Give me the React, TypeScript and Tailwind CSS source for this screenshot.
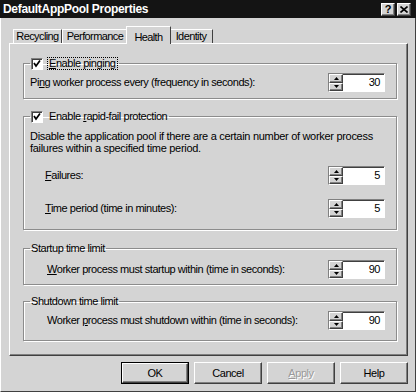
import React from "react";

const raised = "border border-t-white border-l-white border-r-[#404040] border-b-[#404040] shadow-[inset_-1px_-1px_0_#808080]";
const sunken = "border border-t-[#808080] border-l-[#808080] border-r-white border-b-white shadow-[inset_1px_1px_0_#404040]";
const etched = "border border-[#8c8c8c] shadow-[inset_1px_1px_0_#fff,1px_1px_0_#fff]";

function Check() {
  return (
    <span className={`inline-flex h-[12px] w-[12px] items-center justify-center bg-white ${sunken}`}>
      <svg width="8" height="8" viewBox="0 0 8 8">
        <path d="M1 3 L3 6 L7 0.5" fill="none" stroke="#000" strokeWidth="1.7" />
      </svg>
    </span>
  );
}

function Arrow({ up }: { up?: boolean }) {
  return (
    <span className={`flex h-[9px] w-full items-center justify-center bg-[#d4d4d4] ${raised}`}>
      <svg width="5" height="3" viewBox="0 0 5 3">
        <path d={up ? "M2.5 0 L5 3 L0 3 Z" : "M0 0 L5 0 L2.5 3 Z"} fill="#000" />
      </svg>
    </span>
  );
}

function Spin({ value }: { value: string }) {
  return (
    <div className={`flex h-[19px] w-[57px] shrink-0 bg-white ${sunken}`}>
      <div className="flex w-[14px] flex-col bg-[#d4d4d4]">
        <Arrow up />
        <Arrow />
      </div>
      <div className="flex flex-1 items-center justify-end pr-[4px] leading-none">{value}</div>
    </div>
  );
}

function Row({ pl, label, value }: { pl: string; label: React.ReactNode; value: string }) {
  return (
    <div className={`flex items-center justify-between ${pl}`}>
      <span>{label}</span>
      <Spin value={value} />
    </div>
  );
}

function Btn({ children, def, disabled }: { children: React.ReactNode; def?: boolean; disabled?: boolean }) {
  return (
    <div className={`h-[22px] w-[68px] ${def ? "border border-black" : ""}`}>
      <div
        className={`flex h-full w-full items-center justify-center ${raised} ${disabled ? "text-[#9a9a9a] [text-shadow:1px_1px_0_#fff]" : ""}`}
      >
        {children}
      </div>
    </div>
  );
}

const tabs = [
  { name: "Recycling", w: "w-[49px]" },
  { name: "Performance", w: "w-[66px]" },
  { name: "Health", w: "w-[41px]", active: true },
  { name: "Identity", w: "w-[44px]" },
];

export default function App() {
  return (
    <div className="h-[392px] w-[416px] overflow-hidden bg-[#d4d4d4] font-['Liberation_Sans',Arial,sans-serif] text-[11px] tracking-[-0.45px] text-black">
      <div className="flex h-[18px] items-center justify-between bg-[#141414] pl-[3px] pr-[5px]">
        <span className="text-[12px] font-bold tracking-[-0.3px] text-white">DefaultAppPool Properties</span>
        <div className="flex gap-[2px]">
          <span className={`flex h-[13px] w-[14px] items-center justify-center bg-[#d4d4d4] text-[11px] font-bold leading-none ${raised}`}>?</span>
          <span className={`flex h-[13px] w-[14px] items-center justify-center bg-[#d4d4d4] ${raised}`}>
            <svg width="8" height="7" viewBox="0 0 8 7">
              <path d="M0.5 0.5 L7.5 6.5 M7.5 0.5 L0.5 6.5" stroke="#000" strokeWidth="1.6" />
            </svg>
          </span>
        </div>
      </div>

      <div className="flex h-[374px] flex-col border-r border-b border-l border-r-[#404040] border-b-[#404040] border-l-white pt-[9px]">
        <div className="ml-[12px] flex h-[16px] items-end tracking-[-0.6px]">
          {tabs.map((t) =>
            t.active ? (
              <div
                key={t.name}
                className="relative z-10 -mx-[2px] -mb-px flex h-[18px] w-[45px] items-start justify-center border-l border-t border-r border-l-white border-t-white border-r-[#404040] bg-[#d4d4d4] pt-[2px]"
              >
                {t.name}
              </div>
            ) : (
              <div
                key={t.name}
                className={`flex h-[14px] ${t.w} items-center justify-center border-l border-t border-r border-l-white border-t-white border-r-[#404040] leading-none`}
              >
                {t.name}
              </div>
            )
          )}
        </div>

        <div className="ml-[8px] h-[313px] w-[399px] border border-t-white border-l-white border-r-[#404040] border-b-[#404040] shadow-[inset_-1px_-1px_0_#808080] pt-[13px] pl-[13px] pr-[10px]">
          <fieldset className={`pl-[6px] pr-[11px] pb-[6px] ${etched}`}>
            <legend className="flex h-[13px] items-center px-[1px]">
              <Check />
              <span className="ml-[4px] border border-dotted border-black px-[1px] leading-[11px]">
                <u>E</u>nable pinging
              </span>
            </legend>
            <div className="mt-[3px]">
              <Row pl="pl-0" label={<>Pi<u>n</u>g worker process every (frequency in seconds):</>} value="30" />
            </div>
          </fieldset>

          <fieldset className={`mt-[11px] pl-[6px] pr-[11px] pb-[11px] ${etched}`}>
            <legend className="flex h-[13px] items-center px-[1px]">
              <Check />
              <span className="ml-[5px] px-[1px]">
                Enable <u>r</u>apid-fail protection
              </span>
            </legend>
            <p className="mt-[7px] leading-[12px] tracking-[-0.3px]">
              Disable the application pool if there are a certain number of worker process
              <br />
              failures within a specified time period.
            </p>
            <div className="mt-[12px]">
              <Row pl="pl-[15px]" label={<><u>F</u>ailures:</>} value="5" />
            </div>
            <div className="mt-[14px]">
              <Row pl="pl-[15px]" label={<><u>T</u>ime period (time in minutes):</>} value="5" />
            </div>
          </fieldset>

          <fieldset className={`mt-[12px] pl-[6px] pr-[11px] pb-[5px] ${etched}`}>
            <legend className="flex h-[13px] items-center px-[1px]">Startup time limit</legend>
            <div className="mt-[5px]">
              <Row pl="pl-[17px]" label={<><u>W</u>orker process must startup within (time in seconds):</>} value="90" />
            </div>
          </fieldset>

          <fieldset className={`mt-[10px] pl-[6px] pr-[11px] pb-[10px] ${etched}`}>
            <legend className="flex h-[13px] items-center px-[1px]">Shutdown time limit</legend>
            <div className="mt-[3px]">
              <Row pl="pl-[17px]" label={<>Worker <u>p</u>rocess must shutdown within (time in seconds):</>} value="90" />
            </div>
          </fieldset>
        </div>

        <div className="mt-[6px] flex justify-end gap-[5px] pr-[7px]">
          <Btn def>OK</Btn>
          <Btn>Cancel</Btn>
          <Btn disabled>
            <u>A</u>pply
          </Btn>
          <Btn>Help</Btn>
        </div>
      </div>
    </div>
  );
}
